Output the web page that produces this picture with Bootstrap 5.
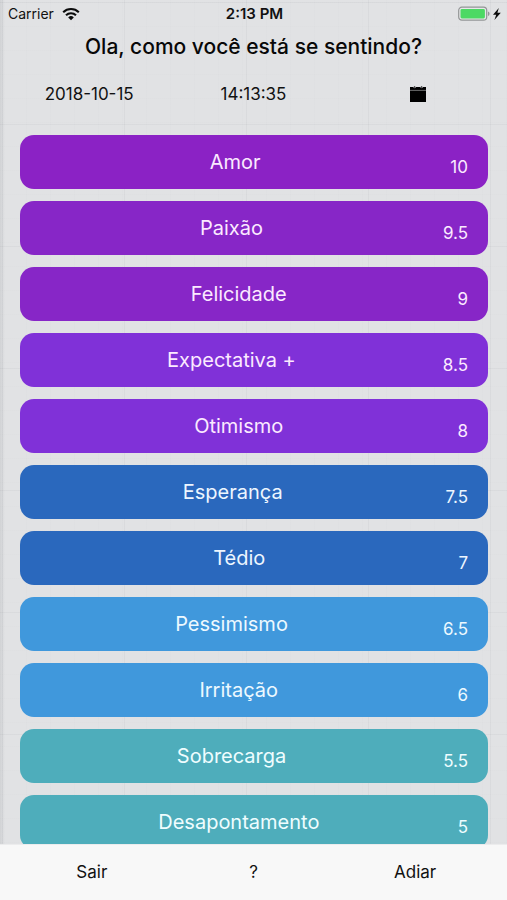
<!DOCTYPE html>
<html lang="pt-BR">
<head>
<meta charset="utf-8">
<meta name="viewport" content="width=device-width, initial-scale=1">
<title>Como você está se sentindo?</title>
<link href="https://cdn.jsdelivr.net/npm/bootstrap@5.3.0/dist/css/bootstrap.min.css" rel="stylesheet">
<style>
  body {
    font-family: Inter, "Liberation Sans", sans-serif;
    color: #111;
    background-color: #e1e2e4;
    background-image:
      linear-gradient(90deg, rgba(110, 115, 120, .14), transparent 5px),
      linear-gradient(90deg, rgba(120, 125, 130, .07) 1px, transparent 1px),
      linear-gradient(rgba(120, 125, 130, .07) 1px, transparent 1px),
      linear-gradient(90deg, rgba(120, 125, 130, .02) 1px, transparent 1px),
      linear-gradient(rgba(120, 125, 130, .02) 1px, transparent 1px);
    background-size: 100% 100%, 122px 122px, 122px 122px, 24px 24px, 24px 24px;
    background-position: 0 0, 2px 2px, 2px 2px, 2px 2px, 2px 2px;
    background-repeat: no-repeat, repeat, repeat, repeat, repeat;
  }
  .status-bar { height: 28px; padding: 0 6px 0 8px; font-size: 14px; line-height: 28px; }
  .clock { font-size: 15px; }
  .question { font-size: 21px; line-height: 37px; font-weight: 500; color: #080808; }
  .stamp { height: 60px; padding: 0 7px; font-size: 17px; }
  .calendar { padding: 0 0 4px; }
  .moods { min-height: 0; overflow-y: auto; scrollbar-width: none; padding: 10px 19px 12px 20px; gap: 12px; }
  .mood { --bs-btn-border-radius: 14px; --bs-btn-color: #fbeaff; --bs-btn-hover-color: #fff; --bs-btn-border-width: 0; height: 54px; padding: 0 20px; gap: 20px; }
  .mood-label { font-size: 20px; line-height: 24px; }
  .mood-score { font-size: 17px; line-height: 20px; padding-top: 10px; }
  .tone-1 { background-color: #8b22c5; }
  .tone-2 { background-color: #8726c7; }
  .tone-3 { background-color: #8031d8; }
  .tone-4 { background-color: #2a68bd; --bs-btn-color: #edf6ff; }
  .tone-5 { background-color: #4098dc; --bs-btn-color: #edf9ff; }
  .tone-6 { background-color: #4eadbb; --bs-btn-color: #effdff; }
  .bottom-bar { height: 56px; padding: 0 11px; background: #f8f8f8; border-top: 1px solid #ececed; }
  .bottom-bar .btn { font-size: 17px; --bs-btn-color: #111; }
</style>
<script src="https://cdn.jsdelivr.net/npm/bootstrap@5.3.0/dist/js/bootstrap.bundle.min.js" defer></script>
</head>
<body class="d-flex flex-column vh-100 overflow-hidden">
<header class="flex-shrink-0">
  <div class="status-bar row g-0 align-items-center">
    <div class="col d-flex align-items-center gap-2">
      <span>Carrier</span>
      <svg width="18" height="14" viewBox="0 0 18 14" role="img" aria-label="Wi-Fi"><g fill="none" stroke="#0b0b0b" stroke-width="2.100"><path d="M1.200 5.200a11.200 11.200 0 0 1 15.600 0"/><path d="M4 8.300a7.200 7.200 0 0 1 10 0"/></g><path d="M6.200 10.400a4.100 4.100 0 0 1 5.600 0L9 13.200z" fill="#0b0b0b"/></svg>
    </div>
    <div class="col-auto clock fw-semibold">2:13 PM</div>
    <div class="col d-flex align-items-center justify-content-end">
      <svg width="44" height="16" viewBox="0 0 44 16" role="img" aria-label="Bateria carregando"><rect x="1.700" y="1.200" width="28" height="13" rx="3.200" fill="#e7e8e9" stroke="#939596" stroke-width="1.200"/><rect x="3.500" y="3" width="24.400" height="9.400" rx="1.400" fill="#4cd964"/><path d="M31 5.500q1.600.5 1.600 2.200t-1.600 2.200z" fill="#939596"/><path d="M41.800 2l-5.800 6.700h3.200l-1.800 5.300 6.400-7.200h-3.400z" fill="#0b0b0b"/></svg>
    </div>
  </div>
  <h1 class="question text-center mb-0">Ola, como você está se sentindo?</h1>
  <div class="stamp row g-0 align-items-center text-center">
    <time class="col-4" datetime="2018-10-15">2018-10-15</time>
    <time class="col-4" datetime="14:13:35">14:13:35</time>
    <div class="col-4"><button class="calendar btn border-0 d-inline-flex" type="button" aria-label="Escolher data"><svg width="16" height="16" viewBox="0 0 16 16"><path d="M0 1h16v15H0z" fill="#000"/><path d="M0 4.400h16" stroke="#858687" stroke-width=".8"/><path d="M3.500 1.300h2.200M10.500 1.300h2.200" stroke="#a5a6a7" stroke-width="1.500"/><path d="M4.600 0v2.600M11.600 0v2.600" stroke="#333" stroke-width=".8"/></svg></button></div>
  </div>
</header>
<main class="moods flex-fill d-flex flex-column">
  <button type="button" class="mood tone-1 btn d-flex flex-shrink-0 align-items-center"><span class="mood-label flex-fill">Amor</span><span class="mood-score">10</span></button>
  <button type="button" class="mood tone-2 btn d-flex flex-shrink-0 align-items-center"><span class="mood-label flex-fill">Paixão</span><span class="mood-score">9.5</span></button>
  <button type="button" class="mood tone-2 btn d-flex flex-shrink-0 align-items-center"><span class="mood-label flex-fill">Felicidade</span><span class="mood-score">9</span></button>
  <button type="button" class="mood tone-3 btn d-flex flex-shrink-0 align-items-center"><span class="mood-label flex-fill">Expectativa +</span><span class="mood-score">8.5</span></button>
  <button type="button" class="mood tone-3 btn d-flex flex-shrink-0 align-items-center"><span class="mood-label flex-fill">Otimismo</span><span class="mood-score">8</span></button>
  <button type="button" class="mood tone-4 btn d-flex flex-shrink-0 align-items-center"><span class="mood-label flex-fill">Esperança</span><span class="mood-score">7.5</span></button>
  <button type="button" class="mood tone-4 btn d-flex flex-shrink-0 align-items-center"><span class="mood-label flex-fill">Tédio</span><span class="mood-score">7</span></button>
  <button type="button" class="mood tone-5 btn d-flex flex-shrink-0 align-items-center"><span class="mood-label flex-fill">Pessimismo</span><span class="mood-score">6.5</span></button>
  <button type="button" class="mood tone-5 btn d-flex flex-shrink-0 align-items-center"><span class="mood-label flex-fill">Irritação</span><span class="mood-score">6</span></button>
  <button type="button" class="mood tone-6 btn d-flex flex-shrink-0 align-items-center"><span class="mood-label flex-fill">Sobrecarga</span><span class="mood-score">5.5</span></button>
  <button type="button" class="mood tone-6 btn d-flex flex-shrink-0 align-items-center"><span class="mood-label flex-fill">Desapontamento</span><span class="mood-score">5</span></button>
</main>
<footer class="bottom-bar flex-shrink-0 row g-0 align-items-center text-center">
  <div class="col-4"><button type="button" class="btn border-0">Sair</button></div>
  <div class="col-4"><button type="button" class="btn border-0" aria-label="Ajuda">?</button></div>
  <div class="col-4"><button type="button" class="btn border-0">Adiar</button></div>
</footer>
</body>
</html>
